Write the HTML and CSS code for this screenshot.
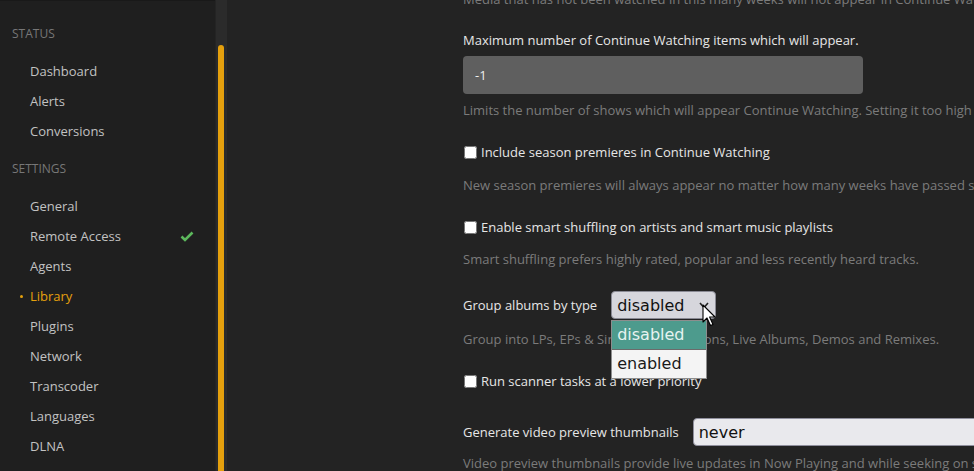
FILE: index.html
```html
<!DOCTYPE html>
<html>
<head>
<meta charset="utf-8">
<link rel="stylesheet" href="styles.css">
</head>
<body>
<div class="app">
  <nav class="sidebar">
    <div class="nav-head first">Status</div>
    <ul class="nav-list">
      <li class="nav-item">Dashboard</li>
      <li class="nav-item">Alerts</li>
      <li class="nav-item">Conversions</li>
    </ul>
    <div class="nav-head">Settings</div>
    <ul class="nav-list">
      <li class="nav-item">General</li>
      <li class="nav-item">Remote Access
        <svg class="check" width="14" height="11" viewBox="0 0 14 11"><path d="M1.5 5.5 L5 9 L12.5 1.5" fill="none" stroke="#5cb85c" stroke-width="2.6"/></svg>
      </li>
      <li class="nav-item">Agents</li>
      <li class="nav-item active">Library</li>
      <li class="nav-item">Plugins</li>
      <li class="nav-item">Network</li>
      <li class="nav-item">Transcoder</li>
      <li class="nav-item">Languages</li>
      <li class="nav-item">DLNA</li>
    </ul>
  </nav>
  <div class="scrolltrack"><div class="thumb"></div></div>
  <main class="main">
    <div class="form">
      <p class="help top-cut">Media that has not been watched in this many weeks will not appear in Continue Watching.</p>

      <div class="label first-label">Maximum number of Continue Watching items which will appear.</div>
      <div class="text-input">-1</div>
      <p class="help after-input">Limits the number of shows which will appear Continue Watching. Setting it too high may impact performance.</p>

      <label class="check-row"><input type="checkbox">Include season premieres in Continue Watching</label>
      <p class="help after-check">New season premieres will always appear no matter how many weeks have passed since the last episode was watched.</p>

      <label class="check-row"><input type="checkbox">Enable smart shuffling on artists and smart music playlists</label>
      <p class="help after-check2">Smart shuffling prefers highly rated, popular and less recently heard tracks.</p>

      <div class="select-row">
        <span class="select-label">Group albums by type</span>
        <div class="select-wrap">
          <div class="select hovered">disabled
            <svg class="chev" width="10" height="7" viewBox="0 0 10 7"><path d="M1 1 L5 5.5 L9 1" fill="none" stroke="#222" stroke-width="1.6"/></svg>
          </div>
          <div class="dropdown">
            <div class="option selected">disabled</div>
            <div class="option">enabled</div>
          </div>
          <svg class="cursor" width="16" height="24" viewBox="0 0 16 24"><path d="M1 1 L1 18 L5 14 L8.5 21.5 L11 20.4 L7.6 13 L13 13 Z" fill="#fff" stroke="#000" stroke-width="1.1" stroke-linejoin="round"/></svg>
        </div>
      </div>
      <p class="help after-select">Group into LPs, EPs &amp; Singles, Compilations, Live Albums, Demos and Remixes.</p>

      <label class="check-row"><input type="checkbox">Run scanner tasks at a lower priority</label>

      <div class="select-row second">
        <span class="select-label">Generate video preview thumbnails</span>
        <div class="select wide">never</div>
      </div>
      <p class="help after-select2">Video preview thumbnails provide live updates in Now Playing and while seeking on supported apps.</p>
    </div>
  </main>
</div>
</body>
</html>
```

FILE: styles.css
```css
html, body {
  margin: 0;
  padding: 0;
  height: 471px;
  overflow: hidden;
  background: #232323;
}
body {
  font-family: "Open Sans", "Noto Sans", sans-serif;
  font-size: 13px;
}
.app {
  display: flex;
  height: 471px;
}
.sidebar {
  width: 215px;
  flex: none;
  background: #1f1f1f;
  border-top: 1px solid #191919;
  box-sizing: border-box;
}
.nav-head {
  padding-left: 12px;
  height: 20px;
  line-height: 20px;
  color: #777;
  font-size: 12px;
  text-transform: uppercase;
  margin-top: 13px;
}
.nav-head.first {
  margin-top: 23px;
}
.nav-list {
  list-style: none;
  margin: 0;
  padding: 0;
}
.nav-head + .nav-list {
  margin-top: 12px;
}
.nav-head.first + .nav-list {
  margin-top: 12px;
}
.nav-item {
  position: relative;
  height: 30px;
  line-height: 30px;
  padding-left: 30px;
  color: #c2c2c2;
}
.nav-item.active {
  color: #e5a00d;
}
.nav-item.active::before {
  content: "";
  position: absolute;
  left: 20px;
  top: 14px;
  width: 3px;
  height: 3px;
  border-radius: 50%;
  background: #e5a00d;
}
.check {
  position: absolute;
  left: 180px;
  top: 10px;
}
.scrolltrack {
  width: 12px;
  flex: none;
  background: #2b2b2b;
  border-left: 1px solid #242424;
  box-sizing: border-box;
  padding-left: 2px;
}
.thumb {
  width: 6px;
  margin-top: 45px;
  height: 460px;
  border-radius: 3px;
  background: #e5a00d;
}
.main {
  flex: 1;
  overflow: hidden;
  min-width: 0;
}
.form {
  padding-left: 236px;
  white-space: nowrap;
}
.help {
  margin: 0;
  line-height: 20px;
  color: #7b7b7b;
}
.top-cut {
  margin-top: -11px;
}
.label {
  line-height: 20px;
  color: #e6e6e6;
}
.first-label {
  margin-top: 21px;
}
.text-input {
  margin-top: 6px;
  width: 400px;
  height: 38px;
  box-sizing: border-box;
  background: #5f5f5f;
  border-radius: 4px;
  color: #eee;
  line-height: 38px;
  padding-left: 12px;
}
.after-input {
  margin-top: 6px;
}
.check-row {
  display: flex;
  align-items: center;
  height: 20px;
  margin-top: 22px;
  color: #e6e6e6;
}
.check-row input {
  width: 13px;
  height: 13px;
  margin: 0 4px 0 1px;
}
.after-check {
  margin-top: 13px;
}
.after-check2 {
  margin-top: 12px;
}
.select-row {
  display: flex;
  align-items: center;
  margin-top: 22px;
  height: 28px;
  color: #e6e6e6;
}
.select-row.second {
  margin-top: 27px;
}
.select-label {
  margin-right: 14px;
}
.select-wrap {
  position: relative;
}
.select {
  position: relative;
  height: 28px;
  box-sizing: border-box;
  border: 1px solid #8f8f9d;
  border-radius: 4px;
  background: #e9e9ed;
  color: #111;
  font-family: "DejaVu Sans", sans-serif;
  font-size: 16px;
  line-height: 27px;
  padding-left: 5px;
}
.select.hovered {
  width: 105px;
  background: #d6d6dc;
  border-color: #8a8a94;
}
.select.wide {
  width: 420px;
  flex: none;
}
.chev {
  position: absolute;
  right: 6px;
  top: 10px;
}
.dropdown {
  position: absolute;
  left: 0;
  top: 29px;
  width: 96px;
  box-sizing: border-box;
  border: 1px solid #8d8d8d;
  background: #f4f4f4;
  font-family: "DejaVu Sans", sans-serif;
  font-size: 16px;
  z-index: 2;
}
.option {
  height: 28px;
  line-height: 28px;
  padding-left: 5px;
  color: #1a1a1a;
}
.option.selected {
  background: #4d9b8d;
  color: #e6f3f0;
  border-bottom: 1px solid #6b6b6b;
}
.cursor {
  position: absolute;
  left: 91px;
  top: 13px;
  z-index: 3;
}
.after-select {
  margin-top: 10px;
}
.after-select2 {
  margin-top: 7px;
}
```
